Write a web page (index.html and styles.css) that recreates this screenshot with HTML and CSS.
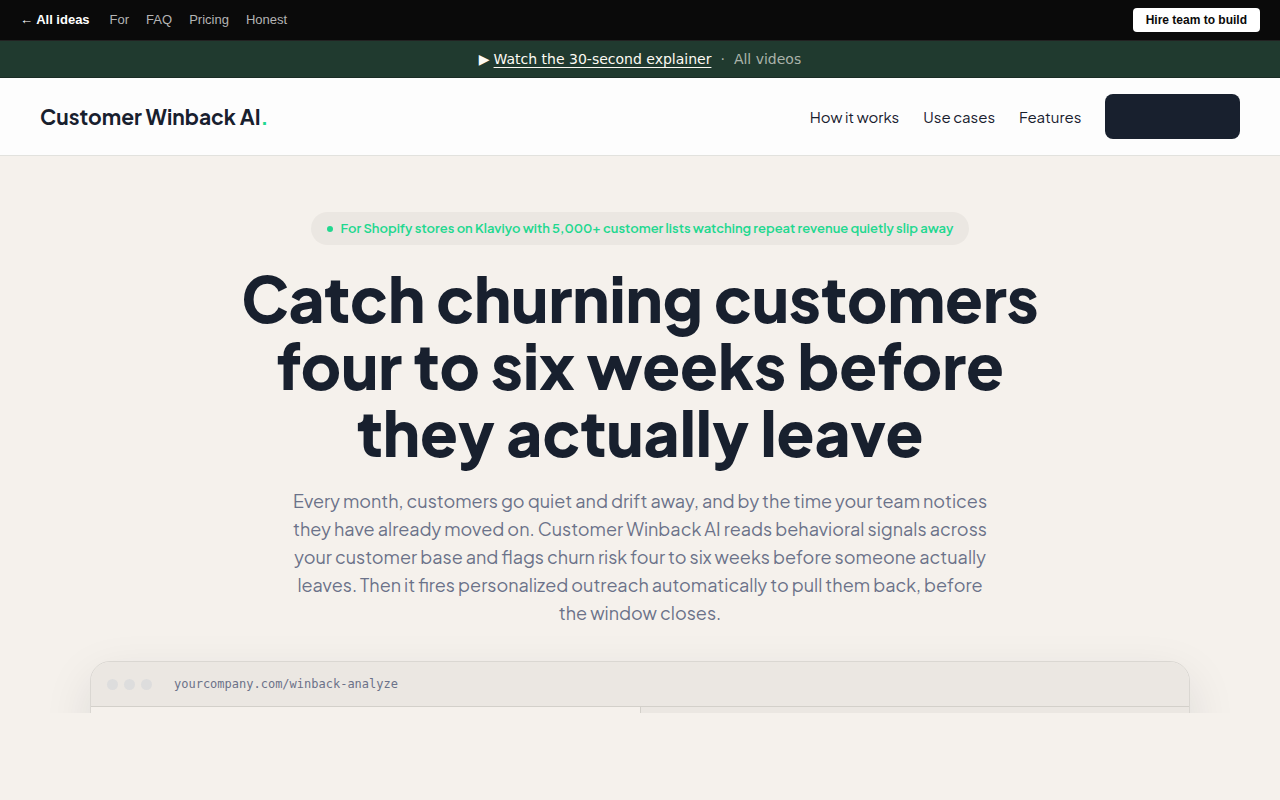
FILE: index.html
```html
<!DOCTYPE html>
<html lang="en">
<head>
    <meta charset="UTF-8">
    <meta name="viewport" content="width=device-width, initial-scale=1.0">
    <title>Customer Winback AI</title>
    <link rel="stylesheet" href="styles.css">
</head>
<body>
    <nav class="topbar">
        <div class="topbar-links">
            <a href="#" class="back">← All ideas</a>
            <a href="#for">For</a>
            <a href="#faq">FAQ</a>
            <a href="#pricing">Pricing</a>
            <a href="#honest">Honest</a>
        </div>
        <a href="#hire" class="hire">Hire team to build</a>
    </nav>

    <div class="video-bar">
        <span>▶</span>
        <a href="#explainer" class="watch">Watch the 30-second explainer</a>
        <span class="sep">·</span>
        <a href="#videos" class="all-videos">All videos</a>
    </div>

    <header class="site-header">
        <a href="#" class="logo">Customer Winback AI<span>.</span></a>
        <nav class="site-nav">
            <a href="#how">How it works</a>
            <a href="#cases">Use cases</a>
            <a href="#features">Features</a>
            <a href="#demo" class="cta">Book a demo</a>
        </nav>
    </header>

    <main class="hero">
        <p class="badge">For Shopify stores on Klaviyo with 5,000+ customer lists watching repeat revenue quietly slip away</p>
        <h1>Catch churning customers four to six weeks before they actually leave</h1>
        <p class="lead">Every month, customers go quiet and drift away, and by the time your team notices they have already moved on. Customer Winback AI reads behavioral signals across your customer base and flags churn risk four to six weeks before someone actually leaves. Then it fires personalized outreach automatically to pull them back, before the window closes.</p>

        <div class="demo-wrap">
            <div class="demo" id="demo">
                <div class="demo-bar">
                    <div class="dots"><i></i><i></i><i></i></div>
                    <span class="url">yourcompany.com/winback-analyze</span>
                </div>
                <div class="demo-body">
                    <div class="pane"></div>
                    <div class="pane pane-side"></div>
                </div>
            </div>
        </div>
    </main>
</body>
</html>
```
FILE: styles.css
```css
* {
    margin: 0;
    padding: 0;
    box-sizing: border-box;
}

body {
    background: #f5f1ec;
    color: #18202e;
    font-family: "Plus Jakarta Sans", Lato, sans-serif;
    min-height: 100vh;
}

a {
    color: inherit;
    text-decoration: none;
}

/* Top bar */
.topbar {
    display: flex;
    align-items: center;
    justify-content: space-between;
    padding: 8px 20px;
    background: #0a0a0a;
    border-bottom: 1px solid #222;
    color: #b4b4b4;
    font: 13px/24px "Liberation Sans", Arial, sans-serif;
}

.topbar-links {
    display: flex;
    gap: 17px;
}

.topbar .back {
    color: #fff;
    font-weight: bold;
    margin-right: 3px;
}

.hire {
    padding: 0 13px;
    border-radius: 4px;
    background: #fff;
    color: #0a0a0a;
    font-size: 12px;
    font-weight: bold;
}

/* Explainer strip */
.video-bar {
    display: flex;
    justify-content: center;
    gap: 4px;
    padding: 8px 20px;
    background: #203a2f;
    border-bottom: 1px solid #1a2c25;
    color: #fdfaf3;
    font: 14px/20px "DejaVu Sans", sans-serif;
}

.watch {
    text-decoration: underline;
    text-underline-offset: 3px;
}

.sep,
.all-videos {
    color: #aab3aa;
}

.sep {
    padding: 0 5px;
}

/* Header */
.site-header {
    display: flex;
    align-items: center;
    justify-content: space-between;
    padding: 16px 40px;
    background: #fdfdfd;
    border-bottom: 1px solid #e2e2de;
}

.logo {
    font-size: 21px;
    font-weight: 700;
}

.logo span {
    color: #21d88f;
}

.site-nav {
    display: flex;
    align-items: center;
    gap: 24px;
    font-size: 15px;
}

.cta {
    padding: 12px 20px;
    border-radius: 8px;
    background: #18202e;
    color: #18202e;
    line-height: 21px;
}

/* Hero */
.hero {
    display: flex;
    flex-direction: column;
    align-items: center;
    padding-top: 56px;
    text-align: center;
}

.badge {
    display: flex;
    align-items: center;
    gap: 8px;
    padding: 6px 16px;
    border-radius: 20px;
    background: #ebe7e2;
    color: #21d88f;
    font-size: 13px;
    font-weight: 600;
    line-height: 21px;
}

.badge::before {
    content: "";
    width: 6px;
    height: 6px;
    border-radius: 50%;
    background: #21d88f;
}

h1 {
    max-width: 820px;
    margin: 20px 0 21px;
    font-size: 62px;
    font-weight: 800;
    line-height: 67px;
}

.lead {
    max-width: 700px;
    color: #6b7289;
    font-size: 18px;
    line-height: 28px;
}

/* Demo window, only its top edge shows */
.demo-wrap {
    align-self: stretch;
    height: 86px;
    padding: 34px 40px 0;
    overflow: hidden;
}

.demo {
    max-width: 1100px;
    margin: 0 auto;
    overflow: hidden;
    border: 1px solid #dad7d2;
    border-radius: 20px;
    background: #f5f1ec;
    box-shadow: 0 16px 48px rgba(24, 32, 46, 0.1);
}

.demo-bar {
    display: flex;
    align-items: center;
    gap: 22px;
    padding: 12px 16px;
    background: #ebe7e2;
    border-bottom: 1px solid #d3d0ca;
}

.dots {
    display: flex;
    gap: 6px;
}

.dots i {
    width: 11px;
    height: 11px;
    border-radius: 50%;
    background: #dddddd;
}

.url {
    color: #6b7289;
    font: 12px/20px "DejaVu Sans Mono", monospace;
}

.demo-body {
    display: grid;
    grid-template-columns: 1fr 1fr;
}

.pane {
    height: 320px;
}

.pane-side {
    background: #ebe7e2;
    border-left: 1px solid #d3d0ca;
}
```
